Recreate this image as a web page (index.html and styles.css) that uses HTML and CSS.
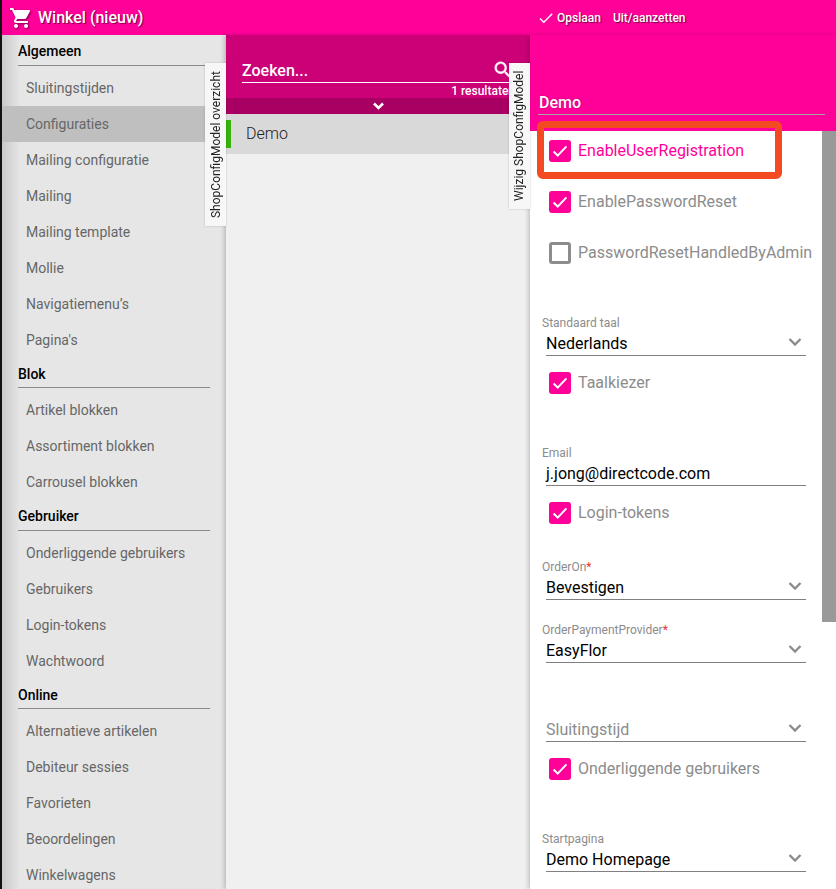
FILE: index.html
```html
<!DOCTYPE html>
<html lang="en">

<head>
  <meta charset="UTF-8">
  <meta name="viewport" content="width=device-width, initial-scale=1.0">
  <title>Winkel (nieuw)</title>
  <link rel="stylesheet" href="styles.css">
</head>

<body>
  <header class="topbar">
    <div class="topbar-title">
      <svg class="cart-icon" viewBox="0 0 24 24"><path d="M7 18c-1.1 0-1.99.9-1.99 2S5.900 22 7 22s2-.9 2-2-.9-2-2-2zM1 2v2h2l3.600 7.590-1.350 2.450c-.16.280-.25.610-.25.960 0 1.100.9 2 2 2h12v-2H7.420c-.14 0-.25-.11-.25-.25l.03-.12.9-1.630h7.450c.75 0 1.410-.41 1.750-1.030l3.580-6.490c.08-.14.120-.31.120-.48 0-.55-.45-1-1-1H5.210l-.94-2H1zm16 16c-1.100 0-1.990.9-1.990 2s.89 2 1.990 2 2-.9 2-2-.9-2-2-2z"/></svg>
      <span>Winkel (nieuw)</span>
    </div>
    <div class="topbar-actions">
      <svg class="save-icon" viewBox="0 0 24 24"><path d="M9 16.200 4.800 12l-1.400 1.400L9 19 21 7l-1.400-1.400z"/></svg>
      <span class="action">Opslaan</span>
      <span class="action">Uit/aanzetten</span>
    </div>
  </header>

  <div class="workspace">
    <nav class="menu">
      <h3>Algemeen</h3>
      <a>Sluitingstijden</a>
      <a class="active">Configuraties</a>
      <a>Mailing configuratie</a>
      <a>Mailing</a>
      <a>Mailing template</a>
      <a>Mollie</a>
      <a>Navigatiemenu’s</a>
      <a>Pagina's</a>
      <h3>Blok</h3>
      <a>Artikel blokken</a>
      <a>Assortiment blokken</a>
      <a>Carrousel blokken</a>
      <h3>Gebruiker</h3>
      <a>Onderliggende gebruikers</a>
      <a>Gebruikers</a>
      <a>Login-tokens</a>
      <a>Wachtwoord</a>
      <h3>Online</h3>
      <a>Alternatieve artikelen</a>
      <a>Debiteur sessies</a>
      <a>Favorieten</a>
      <a>Beoordelingen</a>
      <a>Winkelwagens</a>
    </nav>

    <section class="list">
      <div class="list-head">
        <div class="search">
          <span>Zoeken...</span>
          <svg class="search-icon" viewBox="0 0 24 24"><path d="M15.500 14h-.79l-.28-.27A6.470 6.470 0 0 0 16 9.500 6.500 6.500 0 1 0 9.500 16c1.610 0 3.090-.59 4.230-1.570l.27.28v.79l5 4.990L20.490 19l-4.990-5zm-6 0C7.010 14 5 11.990 5 9.500S7.010 5 9.500 5 14 7.010 14 9.500 11.990 14 9.500 14z"/></svg>
        </div>
        <div class="result-count">1 resultaten</div>
      </div>
      <div class="collapse-bar">
        <svg class="collapse-icon" viewBox="0 0 12 8"><path d="M1.500 1.500 6 6l4.500-4.500"/></svg>
      </div>
      <div class="list-row"><span class="status"></span>Demo</div>
      <div class="side-tab list-tab">ShopConfigModel overzicht</div>
    </section>

    <section class="detail">
      <div class="detail-head">
        <div class="detail-title">Demo</div>
      </div>
      <div class="detail-body">
        <form class="form">
          <label class="check on focus"><span class="box"><svg viewBox="0 0 24 24"><path d="M5 12.500l4.500 4.500 9.500-10"/></svg></span>EnableUserRegistration</label>
          <label class="check on"><span class="box"><svg viewBox="0 0 24 24"><path d="M5 12.500l4.500 4.500 9.500-10"/></svg></span>EnablePasswordReset</label>
          <label class="check"><span class="box"></span>PasswordResetHandledByAdmin</label>

          <div class="field spaced">
            <span class="field-label">Standaard taal</span>
            <div class="field-value">Nederlands<svg class="chevron" viewBox="0 0 14 8"><path d="M1.500 1 7 6.500 12.500 1"/></svg></div>
          </div>
          <label class="check on"><span class="box"><svg viewBox="0 0 24 24"><path d="M5 12.500l4.500 4.500 9.500-10"/></svg></span>Taalkiezer</label>

          <div class="field spaced">
            <span class="field-label">Email</span>
            <div class="field-value">j.jong@directcode.com</div>
          </div>
          <label class="check on"><span class="box"><svg viewBox="0 0 24 24"><path d="M5 12.500l4.500 4.500 9.500-10"/></svg></span>Login-tokens</label>

          <div class="field tight">
            <span class="field-label">OrderOn<i>*</i></span>
            <div class="field-value">Bevestigen<svg class="chevron" viewBox="0 0 14 8"><path d="M1.500 1 7 6.500 12.500 1"/></svg></div>
          </div>
          <div class="field tight">
            <span class="field-label">OrderPaymentProvider<i>*</i></span>
            <div class="field-value">EasyFlor<svg class="chevron" viewBox="0 0 14 8"><path d="M1.500 1 7 6.500 12.500 1"/></svg></div>
          </div>

          <div class="field wide">
            <span class="field-label"></span>
            <div class="field-value placeholder">Sluitingstijd<svg class="chevron" viewBox="0 0 14 8"><path d="M1.500 1 7 6.500 12.500 1"/></svg></div>
          </div>
          <label class="check on"><span class="box"><svg viewBox="0 0 24 24"><path d="M5 12.500l4.500 4.500 9.500-10"/></svg></span>Onderliggende gebruikers</label>

          <div class="field spaced">
            <span class="field-label">Startpagina</span>
            <div class="field-value">Demo Homepage<svg class="chevron" viewBox="0 0 14 8"><path d="M1.500 1 7 6.500 12.500 1"/></svg></div>
          </div>
        </form>
        <div class="scrollbar"><div class="scroll-thumb"></div></div>
      </div>
      <div class="highlight"></div>
      <div class="side-tab detail-tab">Wijzig ShopConfigModel</div>
    </section>
  </div>
</body>

</html>
```

FILE: styles.css
```css
* {
  box-sizing: border-box;
}

html,
body {
  height: 100%;
}

body {
  margin: 0;
  padding-left: 2px;
  background: #111;
  font-family: 'Roboto', sans-serif;
  display: flex;
  flex-direction: column;
  overflow: hidden;
}

.topbar {
  height: 35px;
  flex: none;
  background: #ff0099;
  color: #fff;
  display: flex;
  text-shadow: 1px 1px 1px rgba(0, 0, 0, 0.55);
}

.topbar-title {
  width: 528px;
  display: flex;
  align-items: center;
  padding-left: 7px;
  font-size: 16px;
  font-weight: 500;
}

.cart-icon {
  width: 24px;
  height: 24px;
  margin-right: 5px;
  fill: #fff;
  filter: drop-shadow(1px 1px 1px rgba(0, 0, 0, 0.5));
}

.topbar-actions {
  display: flex;
  align-items: center;
  font-size: 12px;
  font-weight: 500;
  padding-left: 7px;
}

.save-icon {
  width: 18px;
  height: 18px;
  margin-right: 2px;
  fill: #fff;
}

.action {
  margin-right: 12px;
}

.workspace {
  flex: 1;
  display: flex;
  min-height: 0;
}

.menu {
  width: 224px;
  flex: none;
  background: linear-gradient(to right, #c9c9c9, #e6e6e6 18px);
  overflow: hidden;
}

.menu h3 {
  margin: 0 16px 4px;
  height: 30.5px;
  line-height: 33px;
  font-size: 14px;
  font-weight: 500;
  color: #000;
  border-bottom: 1px solid #8a8a8a;
}

.menu a {
  display: block;
  height: 36px;
  line-height: 36px;
  padding-left: 24px;
  font-size: 14px;
  color: #666;
}

.menu a.active {
  background: #bfbfbf;
}

.list {
  width: 304px;
  flex: none;
  position: relative;
  background: #f0f0f0;
  box-shadow: -2px 0 4px rgba(0, 0, 0, 0.18);
  z-index: 1;
}

.list-head {
  height: 63px;
  padding: 24px 15px 0 16px;
  background: #cc0077;
  color: #fff;
}

.search {
  height: 24px;
  display: flex;
  align-items: center;
  justify-content: space-between;
  border-bottom: 1px solid #fff;
  font-size: 16px;
  font-weight: 500;
}

.search-icon {
  width: 22px;
  height: 22px;
  fill: #fff;
  stroke: #fff;
  stroke-width: 0.5;
  margin-right: 1px;
  margin-top: -2px;
}

.result-count {
  margin-top: 1px;
  text-align: right;
  font-size: 12px;
  font-weight: 500;
}

.collapse-bar {
  height: 16px;
  background: #a80062;
  display: flex;
  align-items: center;
  justify-content: center;
}

.collapse-icon {
  width: 13px;
  height: 8px;
  fill: none;
  stroke: #fff;
  stroke-width: 2.600;
}

.list-row {
  height: 40px;
  position: relative;
  background: #d9d9d9;
  padding-left: 20px;
  line-height: 39px;
  font-size: 16px;
  font-weight: 300;
  color: #222;
}

.status {
  position: absolute;
  left: 0;
  top: 6px;
  width: 5px;
  height: 28px;
  background: #35b30a;
}

.side-tab {
  position: absolute;
  top: 28px;
  width: 21px;
  background: #f7f7f7;
  writing-mode: vertical-rl;
  transform: rotate(180deg);
  font-size: 12px;
  line-height: 21px;
  text-align: center;
  color: #222;
  box-shadow: 0 0 2px rgba(0, 0, 0, 0.2);
  z-index: 3;
}

.list-tab {
  left: -21px;
  height: 163px;
  padding-right: 1px;
}

.detail-tab {
  left: -21px;
  height: 146px;
}

.detail {
  flex: 1;
  min-width: 0;
  position: relative;
  display: flex;
  flex-direction: column;
  box-shadow: -2px 0 4px rgba(0, 0, 0, 0.18);
  z-index: 2;
}

.detail-head {
  height: 96px;
  flex: none;
  background: #ff0099;
  padding: 58px 11px 0 8px;
  color: #fff;
}

.detail-title {
  height: 22px;
  line-height: 20px;
  padding-left: 1px;
  font-size: 16px;
  font-weight: 500;
  border-bottom: 1px solid #a5a5a5;
  text-shadow: 0 0 2px rgba(0, 0, 0, 0.3);
}

.detail-body {
  flex: 1;
  min-height: 0;
  display: flex;
  background: #fff;
}

.form {
  flex: 1;
  min-width: 0;
  overflow: hidden;
}

.scrollbar {
  width: 14px;
  flex: none;
}

.scroll-thumb {
  height: 491px;
  background: #999;
}

.check {
  height: 51px;
  display: flex;
  align-items: center;
  padding-left: 19px;
  font-size: 16px;
  color: #8c8c8c;
  white-space: nowrap;
}

.check:first-child {
  margin-top: -6px;
}

.field + .check {
  margin-top: 1px;
}

.check.focus {
  color: #ff0099;
}

.box {
  width: 22px;
  height: 22px;
  flex: none;
  margin-right: 7px;
  border: 3px solid #8c8c8c;
  border-radius: 3px;
}

.check.on .box {
  background: #ff0099;
  border: 0;
}

.box svg {
  display: block;
  width: 22px;
  height: 22px;
  fill: none;
  stroke: #fff;
  stroke-width: 2.200;
}

.field {
  height: 40px;
  margin-left: 12px;
  margin-right: 16px;
}

.field.spaced {
  margin-top: 38px;
}

.field.wide {
  margin-top: 39px;
}

.field.tight {
  margin-top: 22px;
}

.field.tight + .field.tight {
  margin-top: 23px;
}

.field-label {
  display: block;
  height: 14px;
  line-height: 14px;
  font-size: 12px;
  color: #8c8c8c;
}

.field-label i {
  font-style: normal;
  color: #ee3333;
}

.field-value {
  height: 26px;
  margin-left: 4px;
  padding-top: 4px;
  position: relative;
  line-height: 19px;
  font-size: 16px;
  color: #000;
  border-bottom: 1px solid #808080;
}

.field-value.placeholder {
  color: #8c8c8c;
}

.chevron {
  position: absolute;
  right: 4px;
  top: 8px;
  width: 14px;
  height: 8px;
  fill: none;
  stroke: #8c8c8c;
  stroke-width: 2.400;
}

.highlight {
  position: absolute;
  left: 7px;
  top: 86px;
  width: 245px;
  height: 58px;
  border: 7px solid #f44a22;
  border-radius: 6px;
  z-index: 4;
}
```
